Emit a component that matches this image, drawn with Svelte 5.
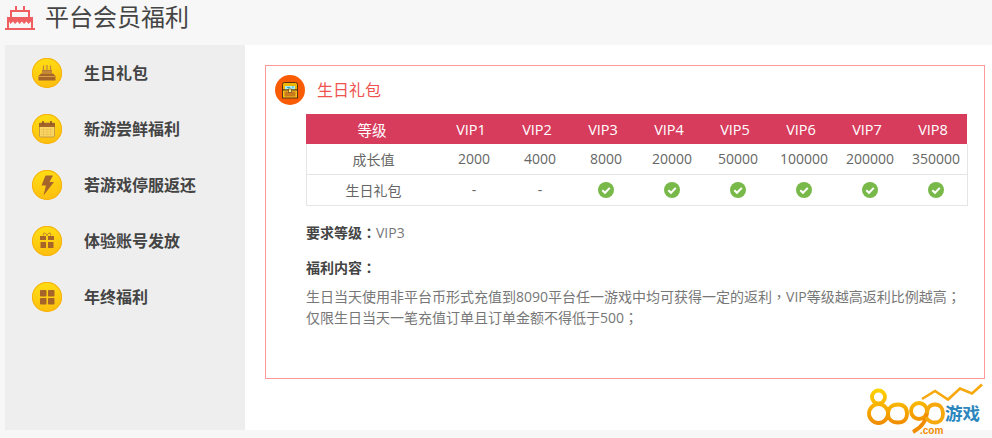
<script>
  const menu = [
    { label: '生日礼包', icon: 'cake' },
    { label: '新游尝鲜福利', icon: 'cal' },
    { label: '若游戏停服返还', icon: 'bolt' },
    { label: '体验账号发放', icon: 'gift' },
    { label: '年终福利', icon: 'grid' }
  ];
  const vips = ['VIP1','VIP2','VIP3','VIP4','VIP5','VIP6','VIP7','VIP8'];
  const growth = ['2000','4000','8000','20000','50000','100000','200000','350000'];
  const gifts = [false,false,true,true,true,true,true,true];
</script>

<div class="page">
  <header class="head">
    <svg class="headicon" width="30" height="24" viewBox="0 0 30 24">
      <g fill="none" stroke="#ef5f61" stroke-width="2">
        <path d="M3 23V12H27V23"/>
        <path d="M6 12V5H24V12"/>
        <path d="M11 0V5M19 0V5"/>
        <path d="M0 23H30"/>
      </g>
      <path d="M4 13H26V15.500L23.500 18L21.500 15.500L19 18L17 15.500L14.500 18L12.500 15.500L10 18L8 15.500L5.500 18L4 15.500Z" fill="#ef5f61"/>
    </svg>
    <h1>平台会员福利</h1>
  </header>
  <div class="main">
    <nav class="side">
      {#each menu as m}
        <div class="item">
          <span class="coin">
            <svg width="30" height="30" viewBox="0 0 30 30">
              {#if m.icon === 'cake'}
                <path d="M6.500 22.500H23.500V18L21 15.500H9L6.500 18Z" fill="#a5652a"/>
                <path d="M10 15.500V12H20V15.500Z" fill="#b57a35"/>
                <path d="M11.500 12V7.500M15 12V7M18.500 12V7.500" stroke="#b98a3c" stroke-width="1.200"/>
                <path d="M7 18.500H23" stroke="#d9a13f" stroke-width="1"/>
                <path d="M10 14H20" stroke="#d9a13f" stroke-width=".8"/>
              {:else if m.icon === 'cal'}
                <rect x="7.500" y="9" width="15" height="14" rx="1" fill="#f9d766" stroke="#c49a45" stroke-width="1"/>
                <path d="M7 9H23V13H7Z" fill="#a5652a"/>
                <path d="M11 7V11M19 7V11" stroke="#8f5523" stroke-width="1.600"/>
                <path d="M9 15.500H21M9 18H21M9 20.500H21M11.500 14V22M15 14V22M18.500 14V22" stroke="#edc253" stroke-width=".8"/>
              {:else if m.icon === 'bolt'}
                <path d="M13.500 5.500H21L17.500 12H22L11.500 25.500L14 15.500H9.500Z" fill="#a5652a"/>
              {:else if m.icon === 'gift'}
                <path d="M11.500 9.500C10.500 6 14 6.500 15 9.500C16 6.500 19.500 6 18.500 9.500" fill="none" stroke="#b57a35" stroke-width="1"/>
                <path d="M8 10H14V14H8ZM16 10H22V14H16ZM8.500 16H14V22H8.500ZM16 16H21.500V22H16Z" fill="#a5652a"/>
              {:else}
                <rect x="8" y="8" width="6.500" height="6.500" rx=".8" fill="#a5652a"/>
                <rect x="16" y="8" width="6.500" height="6.500" rx=".8" fill="#a5652a"/>
                <rect x="8" y="16" width="6.500" height="6.500" rx=".8" fill="#a5652a"/>
                <rect x="16" y="16" width="6.500" height="6.500" rx=".8" fill="#a5652a"/>
              {/if}
            </svg>
          </span>
          <span class="label">{m.label}</span>
        </div>
      {/each}
    </nav>
    <section class="content">
      <div class="box">
        <div class="title">
          <span class="chest">
            <svg width="30" height="30" viewBox="0 0 30 30">
              <path d="M7.500 15V9.500Q7.500 7.500 9.500 7.500H20.500Q22.500 7.500 22.500 9.500V15Z" fill="#f2b705" stroke="#5b3210"/>
              <path d="M10 14.500V11H20V14.500Z" fill="#a8ecef"/>
              <path d="M12 12.500H15M17 12H18.500" stroke="#2fa6c9" stroke-width="1.200"/>
              <rect x="7.500" y="15" width="15" height="8" fill="#f7c51e" stroke="#5b3210"/>
              <rect x="9.500" y="16.500" width="11" height="5" fill="#c97a1c"/>
              <rect x="13.500" y="14" width="3" height="3.500" fill="#ffe27a" stroke="#5b3210" stroke-width=".6"/>
            </svg>
          </span>
          <span class="tname">生日礼包</span>
        </div>
        <div class="table">
          <div class="row hrow">
            <div>等级</div>
            {#each vips as v}<div>{v}</div>{/each}
          </div>
          <div class="row brow">
            <div>成长值</div>
            {#each growth as g}<div>{g}</div>{/each}
          </div>
          <div class="row brow">
            <div>生日礼包</div>
            {#each gifts as on}
              <div>
                {#if on}
                  <svg class="check" width="16" height="16" viewBox="0 0 16 16">
                    <circle cx="8" cy="8" r="8" fill="#79b94a"/>
                    <path d="M4.300 8.200L7 10.800L11.800 5.900" fill="none" stroke="#fff" stroke-width="2"/>
                  </svg>
                {:else}-{/if}
              </div>
            {/each}
          </div>
        </div>
        <div class="info">
          <p class="req"><b>要求等级<span class="tc">：</span></b>VIP3</p>
          <p class="welfare"><b>福利内容<span class="tc">：</span></b></p>
          <p class="desc">生日当天使用非平台币形式充值到8090平台任一游戏中均可获得一定的返利<span class="tc">，</span>VIP等级越高返利比例越高<span class="tc">；</span><br>仅限生日当天一笔充值订单且订单金额不得低于500<span class="tc">；</span></p>
        </div>
      </div>
      <div class="logo">
        <svg width="125" height="56" viewBox="0 0 125 56">
          <defs>
            <linearGradient id="lg" gradientUnits="userSpaceOnUse" x1="0" y1="8" x2="0" y2="44">
              <stop offset="0" stop-color="#ffd500"/>
              <stop offset="1" stop-color="#f08c00"/>
            </linearGradient>
          </defs>
          <g fill="none" stroke="url(#lg)" stroke-width="3.800">
            <circle cx="18.500" cy="17" r="6.500"/>
            <circle cx="18.500" cy="33.500" r="9.500"/>
            <path d="M28 33.500C28 28 32 24.500 38 24.500C44 24.500 47 28 47 33.500C47 39 44 42.500 38 42.500C32 42.500 28 39 28 33.500"/>
            <circle cx="59" cy="31" r="8"/>
            <path d="M67 31C67 40 62 47 53 52" stroke="#f08c00"/>
            <path d="M67 33.500C67 28 70 24.500 75 24.500C80 24.500 83 28 83 33.500C83 39 80 42.500 75 42.500C71 42.500 68 41 66 37" stroke="#f6a80c"/>
          </g>
          <path d="M62 19L75 11L88 19.500L100 8.500L112 13.500L122 4.500" fill="none" stroke="#f6a80c" stroke-width="2.600"/>
        </svg>
        <span class="game">游戏</span>
        <span class="com">.com</span>
      </div>
    </section>
  </div>
</div>

<style>
  :global(body) {
    margin: 0;
    background: #f7f7f7;
  }
  .page {
    width: 992px;
    height: 438px;
    overflow: hidden;
    background: #f7f7f7;
    font-family: "Open Sans", "Noto Sans CJK SC", sans-serif;
    color: #666;
  }
  .head {
    display: flex;
    align-items: flex-start;
    height: 45px;
    padding-left: 5px;
    box-sizing: border-box;
  }
  .headicon { display: block; margin-top: 6px; }
  h1 {
    margin: -1px 0 0 10px;
    font-size: 24px;
    font-weight: 400;
    line-height: 36px;
    color: #444;
  }
  .main {
    display: flex;
    height: 385px;
    margin-left: 5px;
  }
  .side {
    width: 240px;
    flex: none;
    background: #eee;
  }
  .item {
    display: flex;
    align-items: center;
    height: 56px;
    padding-left: 27px;
  }
  .coin {
    width: 30px;
    height: 30px;
    border-radius: 50%;
    background: linear-gradient(170deg, #ffe014, #fdbb0e);
    box-shadow: inset 0 0 0 1px #f5b010;
    flex: none;
  }
  .coin svg { display: block; }
  .label {
    margin: 0 0 2px 22px;
    font-size: 16px;
    font-weight: 700;
    color: #444;
  }
  .content {
    position: relative;
    flex: 1;
    background: #fff;
    padding: 20px 7px 0 20px;
  }
  .box {
    height: 314px;
    box-sizing: border-box;
    border: 1px solid #f99;
    padding: 9px 16px 0 9px;
  }
  .title {
    display: flex;
    align-items: center;
    height: 30px;
  }
  .chest {
    width: 30px;
    height: 30px;
    border-radius: 50%;
    background: #f95c03;
  }
  .chest svg { display: block; }
  .tname {
    margin: 0 0 2px 12px;
    font-size: 16px;
    color: #ef5350;
  }
  .table {
    width: 662px;
    margin: 9px 0 0 31px;
    font-size: 14px;
    text-align: center;
  }
  .row { display: grid; }
  .row > div { display: flex; align-items: center; justify-content: center; }
  .hrow {
    grid-template-columns: 132px repeat(8, 66px);
    width: 661px;
    height: 30px;
    background: #d73c5d;
    color: #fff;
    font-size: 14.500px;
    font-weight: 400;
  }
  .brow {
    grid-template-columns: 134px repeat(8, 66px);
    height: 31px;
    box-sizing: border-box;
    border: 1px solid #e5e5e5;
    border-top: 0;
    padding-bottom: 1px;
  }
  .brow > div:first-child { margin-left: -1px; }
  .check { display: block; margin-top: 1px; }
  .info {
    margin-left: 31px;
    font-size: 14px;
  }
  .info p { margin: 0; }
  .info b { color: #444; font-weight: 700; }
  .tc { font-family: "Noto Sans CJK TC", sans-serif; }
  .req { margin-top: 15px !important; line-height: 22px; color: #777; }
  .welfare { margin-top: 12px !important; line-height: 22px; }
  .desc { margin-top: 7px !important; line-height: 21px; white-space: nowrap; color: #777; }
  .logo {
    position: absolute;
    left: 615px;
    top: 335px;
    width: 125px;
    height: 56px;
  }
  .logo svg { display: block; }
  .game {
    position: absolute;
    left: 85px;
    top: 22px;
    font-size: 17.500px;
    font-weight: 700;
    color: #2a86bd;
    line-height: 22px;
  }
  .com {
    position: absolute;
    left: 60px;
    top: 45px;
    font-family: "Liberation Sans", sans-serif;
    font-size: 10px;
    font-weight: 700;
    color: #f08c00;
    line-height: 11px;
  }
</style>
